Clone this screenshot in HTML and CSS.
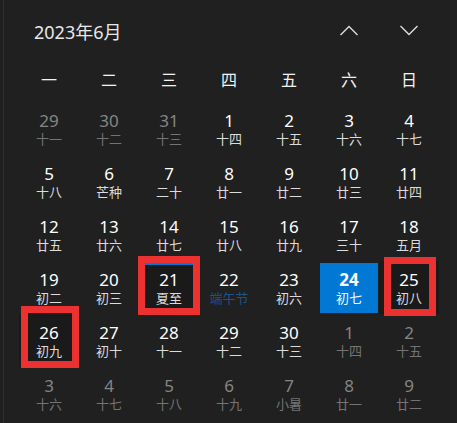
FILE: index.html
```
<!DOCTYPE html>
<html lang="zh-CN">
<head>
<meta charset="utf-8">
<title>日历</title>
<link rel="stylesheet" href="styles.css">
</head>
<body>
<div class="frame">
  <header class="head">
    <div class="title">2023年6月</div>
    <div class="navs">
      <button class="nav" aria-label="上一月"><svg width="20" height="11" viewBox="0 0 20 11"><polyline points="1.5,10 10,1.5 18.5,10" fill="none" stroke="#dcdcdc" stroke-width="1.4"/></svg></button>
      <button class="nav" aria-label="下一月"><svg width="20" height="11" viewBox="0 0 20 11"><polyline points="1.5,1 10,9.5 18.5,1" fill="none" stroke="#dcdcdc" stroke-width="1.4"/></svg></button>
    </div>
  </header>
  <div class="weekdays">
    <span>一</span><span>二</span><span>三</span><span>四</span><span>五</span><span>六</span><span>日</span>
  </div>
  <div class="grid">
    <div class="day other"><span class="n">29</span><span class="l">十一</span></div>
    <div class="day other"><span class="n">30</span><span class="l">十二</span></div>
    <div class="day other"><span class="n">31</span><span class="l">十三</span></div>
    <div class="day"><span class="n">1</span><span class="l">十四</span></div>
    <div class="day"><span class="n">2</span><span class="l">十五</span></div>
    <div class="day"><span class="n">3</span><span class="l">十六</span></div>
    <div class="day"><span class="n">4</span><span class="l">十七</span></div>

    <div class="day"><span class="n">5</span><span class="l">十八</span></div>
    <div class="day"><span class="n">6</span><span class="l">芒种</span></div>
    <div class="day"><span class="n">7</span><span class="l">二十</span></div>
    <div class="day"><span class="n">8</span><span class="l">廿一</span></div>
    <div class="day"><span class="n">9</span><span class="l">廿二</span></div>
    <div class="day"><span class="n">10</span><span class="l">廿三</span></div>
    <div class="day"><span class="n">11</span><span class="l">廿四</span></div>

    <div class="day"><span class="n">12</span><span class="l">廿五</span></div>
    <div class="day"><span class="n">13</span><span class="l">廿六</span></div>
    <div class="day"><span class="n">14</span><span class="l">廿七</span></div>
    <div class="day"><span class="n">15</span><span class="l">廿八</span></div>
    <div class="day"><span class="n">16</span><span class="l">廿九</span></div>
    <div class="day"><span class="n">17</span><span class="l">三十</span></div>
    <div class="day"><span class="n">18</span><span class="l">五月</span></div>

    <div class="day"><span class="n">19</span><span class="l">初二</span></div>
    <div class="day"><span class="n">20</span><span class="l">初三</span></div>
    <div class="day today mark mark-a"><span class="n">21</span><span class="l">夏至</span></div>
    <div class="day"><span class="n">22</span><span class="l fest">端午节</span></div>
    <div class="day"><span class="n">23</span><span class="l">初六</span></div>
    <div class="day selected"><span class="n">24</span><span class="l">初七</span></div>
    <div class="day mark mark-b"><span class="n">25</span><span class="l">初八</span></div>

    <div class="day mark mark-c"><span class="n">26</span><span class="l">初九</span></div>
    <div class="day"><span class="n">27</span><span class="l">初十</span></div>
    <div class="day"><span class="n">28</span><span class="l">十一</span></div>
    <div class="day"><span class="n">29</span><span class="l">十二</span></div>
    <div class="day"><span class="n">30</span><span class="l">十三</span></div>
    <div class="day other"><span class="n">1</span><span class="l">十四</span></div>
    <div class="day other"><span class="n">2</span><span class="l">十五</span></div>

    <div class="day other"><span class="n">3</span><span class="l">十六</span></div>
    <div class="day other"><span class="n">4</span><span class="l">十七</span></div>
    <div class="day other"><span class="n">5</span><span class="l">十八</span></div>
    <div class="day other"><span class="n">6</span><span class="l">十九</span></div>
    <div class="day other"><span class="n">7</span><span class="l">小暑</span></div>
    <div class="day other"><span class="n">8</span><span class="l">廿一</span></div>
    <div class="day other"><span class="n">9</span><span class="l">廿二</span></div>
  </div>
</div>
</body>
</html>
```

FILE: styles.css
```
html, body {
  margin: 0;
  padding: 0;
  background: #202020;
  height: 100%;
  overflow: hidden;
}
body {
  font-family: "Noto Sans", "Noto Sans CJK SC", sans-serif;
  color: #ffffff;
}
.frame {
  margin-left: 3px;
  border-left: 1px solid #2f2f2f;
  height: 423px;
  box-sizing: border-box;
  padding-left: 15px;
}
.head {
  height: 59px;
  display: flex;
  align-items: center;
  justify-content: space-between;
  padding-right: 18px;
}
.title {
  padding-left: 15px;
  font-size: 18px;
  color: #e8e8e8;
  padding-top: 2px;
}
.navs {
  display: flex;
}
.nav {
  width: 60px;
  height: 40px;
  background: none;
  border: 0;
  padding: 0;
  display: flex;
  align-items: center;
  justify-content: center;
  margin-top: 2px;
}
.weekdays {
  display: grid;
  grid-template-columns: repeat(7, 60px);
  height: 40px;
  align-items: center;
  text-align: center;
  font-family: "Noto Sans CJK SC", sans-serif;
  font-size: 16px;
  color: #f2f2f2;
}
.grid {
  margin-top: 3px;
  display: grid;
  grid-template-columns: repeat(7, 60px);
  grid-auto-rows: 53px;
}
.day {
  position: relative;
  display: flex;
  flex-direction: column;
  align-items: center;
  padding-top: 8px;
  box-sizing: border-box;
}
.n {
  display: block;
  height: 21px;
  font-size: 17px;
  line-height: 21px;
  color: #ffffff;
}
.l {
  display: block;
  height: 15px;
  font-family: "Noto Sans CJK SC", sans-serif;
  font-size: 13px;
  line-height: 15px;
  color: #dcdcdc;
}
.l.fest {
  color: #1f5288;
}
.other .n {
  color: #858585;
}
.other .l {
  color: #747474;
}
.selected {
  background: #0078d4;
  margin: 2px 1px 1px 1px;
  padding-top: 6px;
}
.selected .n {
  font-weight: 700;
}
.selected .l {
  color: #ffffff;
}
.today::before {
  content: "";
  position: absolute;
  top: 2px;
  left: 1px;
  right: 1px;
  height: 2px;
  background: #0078d4;
}
.mark::after {
  content: "";
  position: absolute;
  border: 7px solid #ec3131;
  box-sizing: border-box;
}
.mark-a {
  background: #1a1a1a;
}
.mark-a::after {
  top: -5px;
  bottom: -1px;
  left: -1px;
  right: -1px;
}
.mark-b {
  background: #1a1a1a;
}
.mark-b::after {
  top: -4px;
  bottom: -2px;
  left: 5px;
  right: 3px;
}
.mark-c {
  background: #1a1a1a;
}
.mark-c::after {
  top: -8px;
  bottom: -1px;
  left: 2px;
  right: 0px;
}
```
